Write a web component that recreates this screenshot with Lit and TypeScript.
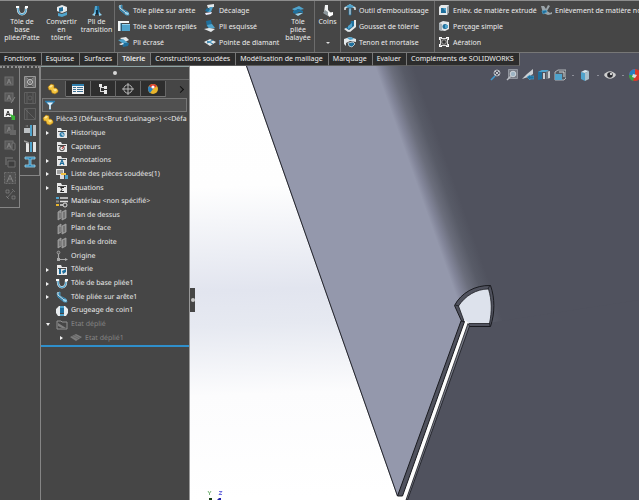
import { LitElement, html, svg, css, nothing } from "lit";
import { customElement, property, state } from "lit/decorators.js";
import { classMap } from "lit/directives/class-map.js";

const B = "#4fa3cc";
const D = "#1f6f9c";
const W = "#e4e8ea";

const folder = svg`<path fill="#e8e8e8" d="M1 1h4l1 2h5v8H1z"/><path fill="#4a4a4a" d="M2 4h8v1H2z"/>`;
const plane = svg`<path fill="#8c8c8c" stroke="#a4a4a4" stroke-width=".8" d="M2 3l3-2v8l-3 2zM6 3l4-2v8l-4 2z"/><path stroke="#555" stroke-width=".8" d="M8 3v6M4 4v5"/>`;
const part = svg`<path fill="#f3c33c" stroke="#a87413" stroke-width=".6" d="M1 4l3-3 3 1v3l2 0 2 2v2l-3 2-3-1-1-3H2z"/><path fill="#fbe79a" d="M2 4l2-2 2 .5-2 2zM6 6.500l3-.5 1 1-2 1.500z"/>`;
const edge = svg`<path fill=${D} stroke=${B} stroke-width=".8" d="M1 2l3-1v4l6 3 1 3H8L2 6z"/><path stroke=${W} d="M2 1v3l6 5"  fill="none"/><path fill="#9ed4ec" d="M8 8l3 1-1 2-3-1z"/>`;
const base = svg`<path fill="none" stroke="#dfe5e8" stroke-width="2.400" d="M2 1v3c0 7 8 7 8 0V2"/><path fill="none" stroke=${B} stroke-width="1.400" d="M2 3c0 9 8 8 8 1"/><path fill="#fff" d="M0 1h3v2H0zM9 1h3v2H9z"/>`;
const dim = (body: unknown) => svg`<g opacity=".4">${body}</g>`;
const note = svg`<rect x="1" y="1" width="8" height="8" fill="#777" stroke="#aaa"/><path d="M3 8l2-5 2 5M4 6h2" stroke="#ddd" fill="none"/>`;

const ICONS: Record<string, unknown> = {
  base,
  convert: svg`<path fill=${W} d="M1 2l5-2 5 2v4L6 8 1 6z"/><path fill=${D} d="M3 3l4-1v4L3 7z"/><path fill=${B} d="M2 8l4 1 5-2v3l-5 2-4-1z"/><path fill="#fff" d="M7 2l3 1-3 1z"/>`,
  transition: svg`<path fill=${D} d="M4 1h4l1 8H3z"/><path fill=${B} d="M4 1h2v8H3z"/><path fill="#8fd0ee" d="M1 10l3-3v4zM11 10L8 7v4z"/><path fill="#112f42" d="M5 5h2v5H5z"/>`,
  edge,
  hem: svg`<path fill="#f2f5f6" d="M0 1h11v2H3v8H0z"/><path fill=${B} d="M4 4h8v7H4z"/><path fill="#8fd0ee" d="M4 4h8v1H4z"/><path stroke=${D} d="M3 3v8"/>`,
  crush: svg`<path fill=${W} d="M2 2l6-1 3 3-4 2z"/><path fill=${B} d="M0 4l5-1 5 4-3 2z"/><path fill=${D} d="M4 7h7l-1 3-5 1z"/><path fill="#fff" d="M1 8l4-1 1 1-3 1z"/>`,
  jog: svg`<path fill=${W} d="M3 1l7-1v3L4 4z"/><path fill=${B} d="M6 3l3 0-2 5-4 0z"/><path fill=${D} d="M3 4l3 1-2 3-3-1z"/><path fill="#eef" d="M1 9l7-1-1 2-5 1z"/>`,
  sketched: svg`<path fill=${D} d="M2 1l5-1 1 5-5 2z"/><path fill=${B} d="M3 5l5-1 3 4-6 1z"/><path fill=${W} d="M0 9l5-1 6 1-4 3z"/>`,
  diamond: svg`<path fill=${W} d="M0 6l6-3 6 3-6 4z"/><path stroke=${D} fill="none" d="M3 5l6 3M3 7l6-3"/><path fill=${B} d="M4 6l2-1 2 1-2 1z"/>`,
  swept: svg`<path fill=${B} d="M0 4l7-3 5 3-4 1-2-1-3 2z"/><path fill=${D} d="M1 6l6-2 4 2v2L7 7l-3 2-3-1z"/><path fill="#9ed4ec" d="M3 9l5-1 3 0-5 3z"/>`,
  corners: svg`<path fill="#f1f3f4" d="M3 0h3v5l3 3 2 1-4 2-5-3z"/><path fill="#8d989d" d="M3 5l3 2v4L1 8z"/><path fill="#fff" d="M6 8l5-1v3l-4 2z"/>`,
  forming: svg`<path fill="none" stroke=${W} stroke-width="1.500" d="M1 6V4l5-3 5 3v2"/><path fill=${B} d="M1 3l5-3 5 3-5 1z"/><path fill="#cfd6da" stroke=${D} stroke-width=".8" d="M5 4h2v7H5z"/>`,
  gusset: svg`<path fill=${D} d="M7 1h3v5l-6 5-3-3 5-2z"/><path fill=${W} d="M10 0h2v7l-6 5-2-1 6-5z"/><path fill=${B} d="M4 6l4-3v4l-4 2z"/><path fill=${W} d="M0 9l2-1 4 3-2 1z"/>`,
  tenon: svg`<path fill=${W} d="M0 3l6-2 6 2v3L6 5 2 7v3L0 8z"/><path fill=${B} d="M3 2l4-1 3 2-4 1z"/><path fill=${D} stroke="#e4e8ea" stroke-width=".7" d="M4 7l5-1 2 2-3 3-3-1z"/>`,
  extruded: svg`<path fill=${W} d="M1 3l2-2h8v7l-2 3H1z"/><path fill=${D} d="M3 4h5v5H3z"/><path fill=${B} d="M5 4h3v4z"/><path fill="#98a2a8" d="M9 3l2-2v7l-2 3z"/>`,
  hole: svg`<path fill=${W} d="M1 3l4-2 6 1v7l-4 2-6-1z"/><circle cx="7" cy="6.500" r="2.500" fill=${D}/><path fill=${B} d="M7 5h3v3H7z"/><path fill="#aab3b8" d="M1 3l3 1v7l-3-1z"/>`,
  vent: svg`<path fill="none" stroke="#ddd" d="M2.500 2.500h7v7h-7z"/><circle cx="6" cy="6" r="2.300" fill="#333" stroke="#bbb" stroke-width=".8"/><path fill="#fff" d="M1 1h3v1H2v2H1zM8 1h3v3h-1V2H8zM1 8h1v2h2v1H1zM10 8h1v3H8v-1h2z"/>`,
  normal: svg`<path fill="#9ba4a9" d="M1 2l3 0 2 3 2-4 2 1-3 5 3 2 2-1v2l-4 1-5-2z"/><path fill=${D} stroke=${B} stroke-width=".6" d="M2 7l4-1 1 2-4 2z"/>`,
  part,
  list: svg`<path fill="#f2f2f2" d="M0 1h12v10H0z"/><path fill="#2f7fae" d="M0 1h12v2H0z"/><path stroke="#3d6f92" d="M1 4.500h3M1 6.500h3M1 8.500h3M5 4.500h6M5 6.500h6M5 8.500h6"/>`,
  config: svg`<path fill="none" stroke="#d8d8d8" d="M3.500 2v7M3.500 4.500h4M3.500 8.500h4"/><path fill="#e8e8e8" d="M2 1h3v3H2zM7 3h3v3H7zM7 7h3v4H7z"/>`,
  target: svg`<circle cx="6" cy="6" r="4.200" fill="none" stroke="#b8b8b8"/><path stroke="#b8b8b8" d="M6 0v12M0 6h12"/>`,
  ball: svg`<circle cx="6" cy="6" r="5" fill="#e8b52c"/><path fill="#d83a2e" d="M6 6L2 3a5 5 0 0 1 8 0z"/><path fill="#2a7fc0" d="M6 6L2 3a5 5 0 0 0 1 7z"/><circle cx="6" cy="4" r="1.600" fill="#fff"/>`,
  funnel: svg`<path fill="#2c7eb0" d="M0 1h12v1L7 7v5H5V7L0 2z"/><path fill="#e8f3fa" d="M2 3h8L7 6v5H5V6z"/>`,
  history: svg`${folder}<circle cx="6" cy="7.500" r="2.500" fill="#2b7aa8"/><path d="M6 6v2h2" stroke="#fff" fill="none" stroke-width=".8"/>`,
  sensor: svg`${folder}<circle cx="6" cy="7.500" r="2.300" fill="none" stroke="#444"/><path d="M6 8l2-3" stroke="#d03030"/>`,
  annot: svg`${folder}<path d="M4 10l2-5 2 5M5 8.500h2" stroke="#1c6c9c" fill="none" stroke-width="1.200"/>`,
  weld: svg`<path fill="#e8e8e8" d="M0 1h8v6H0z"/><path stroke="#555" d="M1 3h6M1 5h6"/><path fill="#f0c040" d="M5 5h5v2H5z"/><path fill=${B} d="M9 7h3v4H9z"/><path fill="#ddd" d="M4 7h4v4H4z"/>`,
  sigma: svg`${folder}<path d="M8 5.500H4.500L6 7.500l-1.500 2H8" stroke="#222" fill="none"/>`,
  material: svg`<path stroke="#ddd" stroke-width="1.500" d="M4 2h8M4 5.500h8M4 9h4"/><path fill=${B} d="M0 1h3v2H0z"/><path fill="#888" d="M0 4.500h3v2H0z"/><path fill="#e8b52c" d="M0 8h3v2H0z"/><circle cx="9" cy="9" r="2" fill="#444" stroke="#ddd"/>`,
  plane,
  origin: svg`<path fill="none" stroke="#a8a8a8" stroke-width="1.200" d="M2.500 2v7.500H11"/><circle cx="2.500" cy="2.500" r="1.400" fill="#555" stroke="#aaa" stroke-width=".8"/><path fill="#aaa" d="M1 8h3v3H1zM9 8l3 1.500L9 11z"/>`,
  sheet: svg`${folder}<path fill=${D} d="M3 5h2v5H3zM6 7l4-2v3l-3 2z"/>`,
  relief: svg`<path fill="#e8ecee" d="M3 1h6l3 3v4l-2 3H8V8H4v3H2L0 8V4z"/><path fill=${D} d="M4 3h4v5H4z"/><path fill=${B} d="M4 1h4v2H4zM4 9h4v2H4z"/>`,
  flatfolder: svg`<g opacity=".5"><path fill="none" stroke="#ddd" d="M1 2h4l1 1h5v7H1z"/><path fill="#bbb" d="M2 4l8 5H6L2 7z"/></g>`,
  flat: svg`<path fill="#7c7c7c" d="M0 5l6-3 6 3-6 4z"/><path stroke="#5c5c5c" stroke-width=".7" d="M2 4l6 3M4 3l6 3"/>`,
  fit: svg`<circle cx="7" cy="4" r="3" fill="none" stroke="#cfd4d8" stroke-width=".8"/><path stroke="#3f9bd0" stroke-width="1.600" d="M5 7l-4 4"/><path stroke="#dfe3e6" stroke-width=".8" d="M5 2l4 4M9 2L5 6"/>`,
  zoomarea: svg`<path stroke="#9da1aa" fill="#767a84" stroke-width=".8" d="M2.500.500h9v9h-9z"/><circle cx="7" cy="5" r="2.800" fill="#9db4c4" stroke="#dfe3e6" stroke-width=".8"/><path stroke="#b9bdc4" stroke-width="1.500" d="M5 7l-4 4"/>`,
  previous: svg`<path fill="#cdd1d4" d="M11 0v5L6 8 0 10l5-5z"/><path fill=${D} stroke=${B} stroke-width=".6" d="M5 8l3-2v1h4v3H8v1z"/>`,
  section: svg`<path fill=${D} d="M0 3l4-2v9l-4 1z"/><path fill=${B} d="M0 3l4-2h7L8 3z"/><path fill="#c9ced2" d="M5 4h2v6H5zM8 3l4-1v7l-4 1z"/><path fill="#6d747b" d="M8 3h2v7H8z"/>`,
  orient: svg`<path fill="#555b62" stroke="#c9ced2" stroke-width=".8" d="M1 3l3-2h8v8l-2 2H1z"/><path fill=${B} d="M1 5h7v6H1z"/><path stroke="#eee" stroke-width=".8" d="M5 3h5v5"  fill="none"/>`,
  shaded: svg`<path fill=${B} d="M2 3l4 1v8L2 10z"/><path fill="#d6e8f0" d="M2 3l4-2 4 1-4 2z"/><path fill="#a8c0cc" d="M6 4l4-2v8l-4 2z"/>`,
  eye: svg`<path fill="#d0d0d0" d="M0 6c3-5 9-5 12 0-3 5-9 5-12 0z"/><circle cx="6" cy="6" r="2.800" fill="#2c2d33"/><circle cx="7" cy="5" r="1" fill="#fff"/>`,
  ballg: svg`<circle cx="6" cy="6" r="6" fill="#d83a2e"/><path fill="#3aa04a" d="M6 6H0a6 6 0 0 0 4 6z"/><path fill="#2a7fc0" d="M0 6a6 6 0 0 1 6-6v6z"/><path fill="#ddd" d="M4 5l4 1-2 3-3-1z"/>`,
  noteDim: dim(note),
  noteDim2: dim(svg`${note}<path stroke="#ddd" d="M7 11l4-6"/>`),
  noteAdd: svg`<path fill="#f2f2f2" d="M0 1h9v8H0z"/><path d="M2 8l2-5 2 5M3 6.500h2" stroke="#333" fill="none"/><path fill="#37b536" d="M6 6l5 2v4H7l1-1z"/>`,
  noteLink: dim(svg`${note}<path fill="#999" d="M6 6h6v5H6z"/>`),
  noteLock: dim(svg`${note}<rect x="8" y="3" width="3" height="7" rx="1" fill="#444" stroke="#bbb"/>`),
  noteWin: dim(svg`<path fill="#888" d="M1 1h8v2H3v6H1z"/><path fill="#333" stroke="#aaa" d="M4 5h7v6H4z"/>`),
  noteBox: dim(svg`<path fill="#666" stroke="#aaa" stroke-dasharray="2 1" d="M.500.500h11v11H.500z"/><path d="M3 10l3-7 3 7M4 7h4" stroke="#ddd" fill="none"/>`),
  noteDots: dim(svg`<path stroke="#aaa" fill="none" d="M2 2h3v3H2zM8 1l3 3M2 8l3 3M8 8h3v3H8zM9 3L3 10"/>`),
  bolt: svg`<path fill="#555" stroke="#999" d="M.500.500h11v11H.500z"/><circle cx="6" cy="6" r="2.500" fill="none" stroke="#ccc"/><path stroke="#aaa" d="M2 1v10M10 1v10M3 2l6 8M9 2L3 10" stroke-width=".7"/>`,
  boltDim: dim(svg`<path fill="none" stroke="#888" d="M.500.500h11v11H.500zM3 1v10M9 1v10"/><circle cx="6" cy="6" r="2" fill="none" stroke="#888"/>`),
  diagDim: dim(svg`<path fill="none" stroke="#888" d="M.500.500h11v11H.500zM1 1l10 10M3 1v10"/>`),
  washer: svg`<path fill="#bcc0c3" d="M0 4h6v5H0zM9 1h3v11H9z"/><path fill=${B} d="M6 1h2v11H6z"/><path fill="#777" d="M1 2l3-1v2z"/>`,
  screw: svg`<path fill="#e4e4e4" d="M2 3h3v9H2zM9 2h3v10H9z"/><path fill=${B} d="M6 2h2v10H6z"/><path stroke="#999" stroke-width="1.500" d="M0 1l5 2"/>`,
  beam: svg`<path fill="#2b86b8" stroke="#9ed4ec" stroke-width=".8" d="M1 1h10v2H7v6h4v2H1V9h4V3H1z"/>`,
};

@customElement("cad-icon")
class CadIcon extends LitElement {
  @property() name = "";
  @property({ type: Number }) size = 12;
  static styles = css`
    :host { display: inline-flex; flex: none; }
    svg { display: block; }
  `;
  render() {
    return html`<svg width=${this.size} height=${this.size} viewBox="0 0 12 12" fill="none" aria-hidden="true">${ICONS[this.name]}</svg>`;
  }
}

@customElement("ribbon-bar")
class RibbonBar extends LitElement {
  static styles = css`
    :host {
      display: flex; height: 51px; overflow: hidden; color: #ececec;
      background: #464646; border-top: 1px solid #8d8d8d; border-bottom: 1px solid #777;
    }
    button {
      font: inherit; color: inherit; background: none; border: 0; padding: 0; margin: 0;
      flex: none; white-space: nowrap; cursor: pointer;
    }
    .big { display: flex; flex-direction: column; align-items: center; padding-top: 4px; line-height: 8px; gap: 1px; }
    .big span { white-space: pre-line; text-align: center; line-height: 8px; }
    .big .caret { margin-top: 15px; border: 2px solid transparent; border-top-color: #ddd; }
    .w44 { width: 44px; }
    .w35 { width: 35px; }
    .w32 { width: 32px; }
    .w25 { width: 25px; }
    .col { display: flex; flex-direction: column; flex: none; padding: 1px 0 0 3px; box-sizing: border-box; }
    .col button { display: flex; align-items: center; gap: 3px; height: 16px; }
    .c1 { width: 86px; }
    .c2 { width: 81px; }
    .c3 { width: 93px; }
    .c4 { width: 102px; }
    .sep { flex: none; width: 1px; background: #6c6c6c; }
  `;
  private big(icon: string, label: string, cls: string, caret = false) {
    return html`<button class="big ${cls}"><cad-icon name=${icon} size="12"></cad-icon><span>${label}</span>${caret ? html`<i class="caret"></i>` : nothing}</button>`;
  }
  private col(cls: string, items: string[][]) {
    return html`<div class="col ${cls}">${items.map(([i, t]) => html`<button><cad-icon name=${i} size="12"></cad-icon><span>${t}</span></button>`)}</div>`;
  }
  render() {
    return html`
      ${this.big("base", "Tôle de\nbase\npliée/Patte", "w44")}
      ${this.big("convert", "Convertir\nen\ntôlerie", "w35")}
      ${this.big("transition", "Pli de\ntransition", "w35")}
      <div class="sep"></div>
      ${this.col("c1", [["edge", "Tôle pliée sur arête"], ["hem", "Tôle à bords repliés"], ["crush", "Pli écrasé"]])}
      ${this.col("c2", [["jog", "Décalage"], ["sketched", "Pli esquissé"], ["diamond", "Pointe de diamant"]])}
      ${this.big("swept", "Tôle\npliée\nbalayée", "w32")}
      <div class="sep"></div>
      ${this.big("corners", "Coins", "w25", true)}
      <div class="sep"></div>
      ${this.col("c3", [["forming", "Outil d'emboutissage"], ["gusset", "Gousset de tôlerie"], ["tenon", "Tenon et mortaise"]])}
      <div class="sep"></div>
      ${this.col("c4", [["extruded", "Enlèv. de matière extrudé"], ["hole", "Perçage simple"], ["vent", "Aération"]])}
      ${this.col("", [["normal", "Enlèvement de matière no"]])}
    `;
  }
}

@customElement("command-tabs")
class CommandTabs extends LitElement {
  @state() private active = "Tôlerie";
  private tabs = ["Fonctions", "Esquisse", "Surfaces", "Tôlerie", "Constructions soudées", "Modélisation de maillage", "Marquage", "Evaluer", "Compléments de SOLIDWORKS"];
  static styles = css`
    :host { display: flex; height: 13px; background: #50525e; }
    button {
      font: inherit; color: #f0f0f0; background: #2c2c2c; border: 0; border-right: 1px solid #777;
      border-bottom: 1px solid #5c5c5c; padding: 0 5px 0 4px; margin: 0; line-height: 12px; white-space: nowrap; cursor: pointer;
    }
    .on { background: #464646; border-bottom-color: #464646; font-weight: 600; }
  `;
  render() {
    return html`${this.tabs.map((t) => html`<button role="tab" aria-selected=${t === this.active} class=${classMap({ on: t === this.active })} @click=${() => (this.active = t)}>${t}</button>`)}`;
  }
}

interface Row { icon: string; text: string; mark?: "closed" | "open"; level?: number; dim?: boolean; }

const ROWS: Row[] = [
  { icon: "part", text: "Pièce3 (Défaut<Brut d'usinage>) <<Défa", level: 0 },
  { icon: "history", text: "Historique", mark: "closed" },
  { icon: "sensor", text: "Capteurs" },
  { icon: "annot", text: "Annotations", mark: "closed" },
  { icon: "weld", text: "Liste des pièces soudées(1)", mark: "closed" },
  { icon: "sigma", text: "Equations", mark: "closed" },
  { icon: "material", text: "Matériau <non spécifié>" },
  { icon: "plane", text: "Plan de dessus" },
  { icon: "plane", text: "Plan de face" },
  { icon: "plane", text: "Plan de droite" },
  { icon: "origin", text: "Origine" },
  { icon: "sheet", text: "Tôlerie", mark: "closed" },
  { icon: "base", text: "Tôle de base pliée1", mark: "closed" },
  { icon: "edge", text: "Tôle pliée sur arête1", mark: "closed" },
  { icon: "relief", text: "Grugeage de coin1" },
  { icon: "flatfolder", text: "Etat déplié", mark: "open", dim: true },
  { icon: "flat", text: "Etat déplié1", mark: "closed", level: 2, dim: true },
];

@customElement("feature-tree")
class FeatureTree extends LitElement {
  static styles = css`
    :host { display: block; overflow: hidden; color: #ececec; border-left: 1px solid #858585; }
    button { font: inherit; color: inherit; background: none; border: 0; padding: 0; margin: 0; cursor: pointer; }
    .grip { height: 12px; display: flex; align-items: center; justify-content: center; border-top: 1px solid #8fa3a3; border-bottom: 1px solid #6a6a6a; }
    .grip i { width: 4px; height: 4px; border-radius: 50%; background: #d8d8d8; }
    .tabs { display: flex; height: 16px; margin-top: 1px; }
    .tabs button { flex: none; box-sizing: border-box; width: 25px; display: flex; align-items: center; justify-content: center; background: #2e2e2e; border-right: 1px solid #666; border-bottom: 1px solid #777; }
    .tabs .on { background: #464646; border-bottom-color: #464646; }
    .tabs .more { background: none; border: 0; width: 14px; margin-left: 7px; }
    .chev { width: 4px; height: 4px; border: solid #111; border-width: 1px 1px 0 0; transform: rotate(45deg); }
    .filter { display: flex; align-items: center; gap: 2px; height: 14px; margin: 1px 2px 0 1px; padding-left: 2px; background: #505050; border: 1px solid #777; box-sizing: border-box; }
    .filter input { flex: 1; min-width: 0; height: 11px; font: inherit; color: inherit; background: none; border: 0; padding: 0; outline: none; }
    ul { list-style: none; margin: 0; padding: 1px 0 0; height: 232px; display: grid; grid-auto-rows: 1fr; border-bottom: 2px solid #2f8fcb; }
    li { display: flex; align-items: center; gap: 3px; padding-left: 1px; white-space: nowrap; min-height: 0; }
    .toggle { flex: none; width: 11px; height: 10px; display: flex; align-items: center; justify-content: center; }
    .lvl0 { gap: 2px; padding-left: 1px; }
    .lvl2 { padding-left: 15px; }
    .dim span { color: #858585; }
    .closed i { border: 2px solid transparent; border-left: 3px solid #f2f2f2; border-right: 0; }
    .open i { border: 2px solid transparent; border-top: 3px solid #f2f2f2; border-bottom: 0; }
  `;
  render() {
    return html`
      <div class="grip"><i></i></div>
      <div class="tabs">
        ${["part", "list", "config", "target", "ball"].map((n, i) => html`<button role="tab" aria-label=${n} class=${i ? "" : "on"}><cad-icon name=${n} size="12"></cad-icon></button>`)}
        <button class="more" aria-label="more"><i class="chev"></i></button>
      </div>
      <label class="filter"><cad-icon name="funnel" size="10"></cad-icon><input aria-label="Filter" /></label>
      <ul role="tree">
        ${ROWS.map((r) => html`<li role="treeitem" class=${classMap({ [`lvl${r.level ?? 1}`]: true, dim: !!r.dim })}>
          ${r.level === 0 ? nothing : html`<button class="toggle ${r.mark ?? ""}" aria-label=${r.text}><i></i></button>`}
          <cad-icon name=${r.icon} size="12"></cad-icon><span>${r.text}</span>
        </li>`)}
      </ul>
    `;
  }
}

@customElement("tool-strip")
class ToolStrip extends LitElement {
  @property({ type: Array }) icons: string[] = [];
  static styles = css`
    :host {
      display: flex; flex-direction: column; align-items: center; align-self: start;
      width: 19px; padding: 6px 0 5px; border-top: 2px dotted #909090;
      border-right: 1px solid #858585; border-bottom: 1px solid #858585;
    }
    button { display: flex; align-items: center; justify-content: center; width: 16px; height: 16px; border: 0; padding: 0; background: none; cursor: pointer; }
  `;
  render() {
    return html`${this.icons.map((n) => html`<button aria-label=${n}><cad-icon name=${n} size="12"></cad-icon></button>`)}`;
  }
}

@customElement("model-view")
class ModelView extends LitElement {
  static styles = css`
    :host { display: block; position: relative; overflow: hidden; background: #fff; }
    .scene { display: block; width: 100%; height: 100%; }
    .hud { position: absolute; top: 3px; right: 0; width: 151px; display: flex; align-items: center; overflow: hidden; }
    .hud button { flex: none; display: flex; justify-content: center; width: 16px; border: 0; padding: 0; background: none; cursor: pointer; }
    .hud .drop { width: 9px; }
    .drop i { width: 2px; height: 1px; background: #8c8e98; }
    .handle { position: absolute; left: 0; top: 222px; width: 5px; height: 24px; padding: 0; border: 0; background: #464646; display: flex; align-items: center; justify-content: center; }
    .handle i { width: 4px; height: 4px; border-radius: 50%; background: #c8c8c8; }
  `;
  render() {
    return html`
      <svg class="scene" viewBox="190 66 449 434" preserveAspectRatio="xMinYMin slice" role="img" aria-label="Model">
        <defs>
          <linearGradient id="sky" x1="190" y1="66" x2="205" y2="500" gradientUnits="userSpaceOnUse">
            <stop offset="0" stop-color="#ffffff" /><stop offset=".28" stop-color="#fefefe" />
            <stop offset=".52" stop-color="#e2e5ef" /><stop offset=".6" stop-color="#e6e9f1" />
            <stop offset=".76" stop-color="#fcfcfd" /><stop offset="1" stop-color="#ffffff" />
          </linearGradient>
          <linearGradient id="bend" x1="375" y1="66" x2="409" y2="54" gradientUnits="userSpaceOnUse">
            <stop offset="0" stop-color="#9498ac" /><stop offset=".15" stop-color="#83869a" />
            <stop offset=".4" stop-color="#6b6e7c" /><stop offset=".7" stop-color="#585b67" /><stop offset="1" stop-color="#50525e" />
          </linearGradient>
        </defs>
        <rect x="190" y="66" width="449" height="434" fill="url(#sky)" />
        <path fill="url(#bend)" d="M246 66H639V500H406L469 326 462 321 400 496H397Z" />
        <path stroke="#24252b" stroke-width="1" d="M246.500 66L397.500 496" />
        <path fill="#50525e" d="M469 326L639 300V500H406Z" />
        <path fill="#50525e" stroke="#191a1f" d="M454.500 305.500C461 293 475 285 490.500 285.500C495 298 495 313 490.500 326.500L468.500 326.500 461.500 321Z" />
        <path fill="#dde2ec" stroke="#191a1f" stroke-width=".8" d="M458.500 306C465 296 476 289 488.500 289C492 301 492 311 489.500 323.500H467L464 321Z" />
        <path fill="none" stroke="#191a1f" stroke-width=".8" d="M488 289L490 285M489.500 323L490 326.500M455 305L459 306" />
        <path fill="#fdfdfd" d="M464.500 320L469 323 406 500H397L402 496Z" />
        <path fill="#50525e" stroke="#191a1f" d="M461 321L464.500 321.500 402.500 496H397.500Z" />
        <path fill="#777a87" stroke="#191a1f" stroke-width=".8" d="M468 323.500L469.500 326 407.500 500H406Z" />
        <path fill="none" stroke="#57a257" stroke-width=".8" d="M208 491L209.500 493.500 211 491M209.500 493.500V495" />
        <path fill="none" stroke="#4a4ad8" stroke-width=".8" d="M219 491.500H222L219 494.500H222" />
        <path fill="#173d17" d="M209 498h3v2h-3z" /><path fill="#2222a8" d="M219 498h2v2h-4z" />
      </svg>
      <div class="hud">
        ${["fit", "zoomarea", "previous", "section", "orient", "", "shaded", "", "eye", "", "ballg"].map((n) =>
          n ? html`<button aria-label=${n}><cad-icon name=${n} size="12"></cad-icon></button>` : html`<button class="drop" aria-label="options"><i></i></button>`)}
      </div>
      <button class="handle" aria-label="Collapse"><i></i></button>
    `;
  }
}

@customElement("app-root")
class AppRoot extends LitElement {
  static styles = css`
    :host {
      display: flex; flex-direction: column; height: 100vh; overflow: hidden; background: #464646;
      font-family: "Noto Sans", "Open Sans", sans-serif; font-size: 7px; text-rendering: geometricPrecision;
    }
    main { flex: 1; min-height: 0; display: grid; grid-template-columns: 20px 20px 149px minmax(0, 1fr); }
    model-view { border-left: 1px solid #999; }
  `;
  render() {
    return html`
      <ribbon-bar></ribbon-bar>
      <command-tabs role="tablist"></command-tabs>
      <main>
        <tool-strip .icons=${["noteDim", "noteDim2", "noteAdd", "noteLink", "noteLock", "noteWin", "noteBox", "noteDots"]}></tool-strip>
        <tool-strip .icons=${["bolt", "boltDim", "diagDim", "washer", "screw", "beam"]}></tool-strip>
        <feature-tree></feature-tree>
        <model-view></model-view>
      </main>
    `;
  }
}
